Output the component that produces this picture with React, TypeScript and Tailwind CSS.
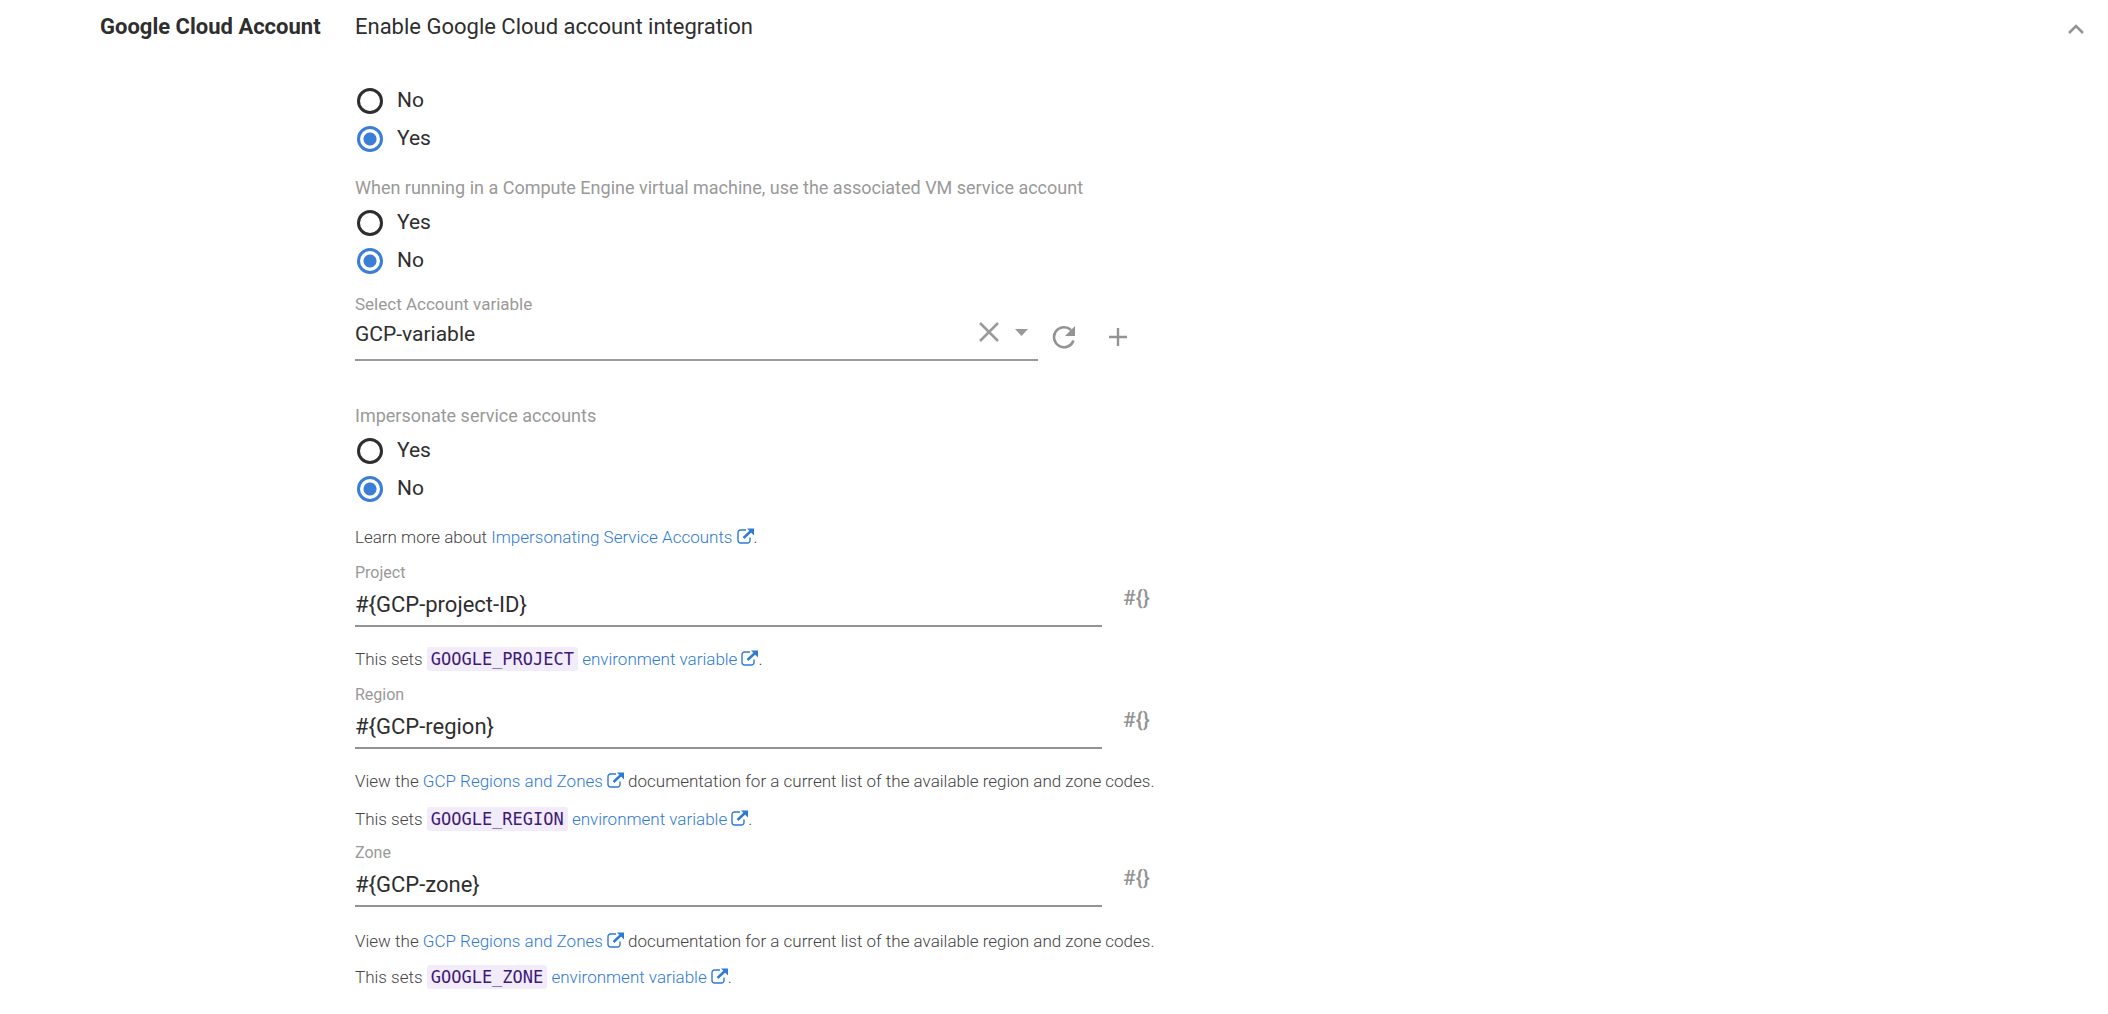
import { useId, useState } from "react";
import type { ReactNode } from "react";

function ExternalIcon() {
  return (
    <svg viewBox="0 0 17 16" className="ml-1 inline-block h-4 w-[17px] align-[-1px]" fill="none" aria-hidden="true">
      <path d="M9 2H3.500A2.500 2.500 0 0 0 1 4.500V12.500A2.500 2.500 0 0 0 3.500 15H10.500A2.500 2.500 0 0 0 13 12.500V9.500" stroke="currentColor" strokeWidth="1.400" />
      <path d="M6.500 10L14 3" stroke="currentColor" strokeWidth="2.400" />
      <path d="M10 0.500H17V7.500Z" fill="currentColor" />
    </svg>
  );
}

function DocLink({ children }: { children: ReactNode }) {
  return (
    <a href="#docs" className="text-[#2f7ad6]">
      {children}
      <ExternalIcon />
    </a>
  );
}

function Code({ children }: { children: ReactNode }) {
  return (
    <code className="rounded-[3px] bg-[#f2ebf9] px-1 py-[2px] font-['DejaVu_Sans_Mono',monospace] text-[17px] font-normal leading-5 text-[#3c1a78]">
      {children}
    </code>
  );
}

function Help({ children }: { children: ReactNode }) {
  return <p className="text-[17px] font-light leading-6 text-[#444]">{children}</p>;
}

function RadioGroup({ legend, options, initial }: { legend?: string; options: string[]; initial: string }) {
  const name = useId();
  const [value, setValue] = useState(initial);
  return (
    <fieldset aria-label={legend ?? "Enable Google Cloud account integration"}>
      {legend && <legend className="mb-1 text-lg leading-6 text-[#999]">{legend}</legend>}
      {options.map((option) => (
        <label key={option} className="flex h-[38px] w-fit items-center gap-3.5 pl-0.5 text-[21px] leading-7 text-[#2e2e2e]">
          <input
            type="radio"
            name={name}
            checked={value === option}
            onChange={() => setValue(option)}
            className="size-[26px] shrink-0 appearance-none rounded-full border-[3px] border-[#2e2e2e] bg-white checked:border-[#3a7fd5] checked:bg-[radial-gradient(circle,#3a7fd5_6px,transparent_7px)]"
          />
          <span className="pb-0.5">{option}</span>
        </label>
      ))}
    </fieldset>
  );
}

function BindableField({ label, initial }: { label: string; initial: string }) {
  const id = useId();
  const [value, setValue] = useState(initial);
  return (
    <div className="flex items-center gap-[21px]">
      <div className="max-w-[747px] flex-1 border-b-2 border-[#939393] pb-1.5">
        <label htmlFor={id} className="block text-base leading-6 text-[#999]">
          {label}
        </label>
        <input
          id={id}
          value={value}
          onChange={(e) => setValue(e.target.value)}
          className="mt-1.5 block h-7 w-full bg-transparent text-[22px] leading-7 text-[#2e2e2e] outline-none"
        />
      </div>
      <button type="button" aria-label={`Bind ${label}`} className="mt-2 h-7 text-[21px] font-medium leading-7 text-[#939393]">
        #{"{}"}
      </button>
    </div>
  );
}

function AccountSelect() {
  const [value, setValue] = useState("GCP-variable");
  return (
    <div className="flex items-center">
      <div className="max-w-[683px] flex-1 border-b-2 border-[#9a9a9a] pb-[11px]">
        <label htmlFor="account" className="block text-[17px] leading-6 text-[#999]">
          Select Account variable
        </label>
        <div className="mt-1 flex h-7 items-start">
          <select
            id="account"
            value={value}
            onChange={(e) => setValue(e.target.value)}
            className="h-7 min-w-0 flex-1 appearance-none bg-transparent text-[21px] leading-7 text-[#2e2e2e] outline-none"
          >
            <option value="GCP-variable">GCP-variable</option>
            <option value=""></option>
          </select>
          <div className="flex h-6 items-center">
            <button type="button" aria-label="Clear" onClick={() => setValue("")} className="mr-4 text-[#999]">
              <svg viewBox="0 0 20 20" className="size-5" aria-hidden="true">
                <path d="M1 1L19 19M19 1L1 19" stroke="currentColor" strokeWidth="2.500" />
              </svg>
            </button>
            <svg viewBox="0 0 13 7" className="mr-2.5 h-[7px] w-[13px] text-[#999]" aria-hidden="true">
              <path d="M0 0H13L6.500 7Z" fill="currentColor" />
            </svg>
          </div>
        </div>
      </div>
      <button type="button" aria-label="Refresh" className="ml-3.5 mt-5 text-[#939393]">
        <svg viewBox="0 0 24 24" className="size-6" aria-hidden="true">
          <path d="M21.500 15.500A10 10 0 1 1 19 5" fill="none" stroke="currentColor" strokeWidth="2.600" />
          <path d="M23 1V11H13Z" fill="currentColor" />
        </svg>
      </button>
      <button type="button" aria-label="Add" className="ml-8 mt-5 text-[#939393]">
        <svg viewBox="0 0 20 20" className="size-5" aria-hidden="true">
          <path d="M10 1V19M1 10H19" stroke="currentColor" strokeWidth="2.400" />
        </svg>
      </button>
    </div>
  );
}

function RegionsHelp() {
  return (
    <Help>
      View the <DocLink>GCP Regions and Zones</DocLink> documentation for a current list of the available region and zone codes.
    </Help>
  );
}

function EnvHelp({ name }: { name: string }) {
  return (
    <Help>
      This sets <Code>{name}</Code> <DocLink>environment variable</DocLink>.
    </Help>
  );
}

export default function App() {
  return (
    <main className="min-h-screen bg-white pt-3 pr-5 pl-[100px] font-['Roboto',sans-serif] text-[#2e2e2e]">
      <header className="flex items-start">
        <h2 className="w-[255px] shrink-0 text-[22px] font-bold leading-[30px]">Google Cloud Account</h2>
        <p className="flex-1 text-[22px] leading-[30px]">Enable Google Cloud account integration</p>
        <button type="button" aria-label="Collapse" className="mt-3 mr-1 text-[#939393]">
          <svg viewBox="0 0 16 10" className="h-2.5 w-4" fill="none" aria-hidden="true">
            <path d="M1 9L8 2L15 9" stroke="currentColor" strokeWidth="2.600" />
          </svg>
        </button>
      </header>
      <div className="flex flex-col pt-10 pl-[255px]">
        <RadioGroup options={["No", "Yes"]} initial="Yes" />
        <div className="mt-[18px]">
          <RadioGroup legend="When running in a Compute Engine virtual machine, use the associated VM service account" options={["Yes", "No"]} initial="No" />
        </div>
        <div className="mt-3">
          <AccountSelect />
        </div>
        <div className="mt-[43px]">
          <RadioGroup legend="Impersonate service accounts" options={["Yes", "No"]} initial="No" />
        </div>
        <div className="mt-[17px]">
          <Help>
            Learn more about <DocLink>Impersonating Service Accounts</DocLink>.
          </Help>
        </div>
        <div className="mt-3">
          <BindableField label="Project" initial="#{GCP-project-ID}" />
        </div>
        <div className="mt-5">
          <EnvHelp name="GOOGLE_PROJECT" />
        </div>
        <div className="mt-3">
          <BindableField label="Region" initial="#{GCP-region}" />
        </div>
        <div className="mt-5 flex flex-col gap-3.5">
          <RegionsHelp />
          <EnvHelp name="GOOGLE_REGION" />
        </div>
        <div className="mt-2.5">
          <BindableField label="Zone" initial="#{GCP-zone}" />
        </div>
        <div className="mt-[22px] flex flex-col gap-3">
          <RegionsHelp />
          <EnvHelp name="GOOGLE_ZONE" />
        </div>
      </div>
    </main>
  );
}
